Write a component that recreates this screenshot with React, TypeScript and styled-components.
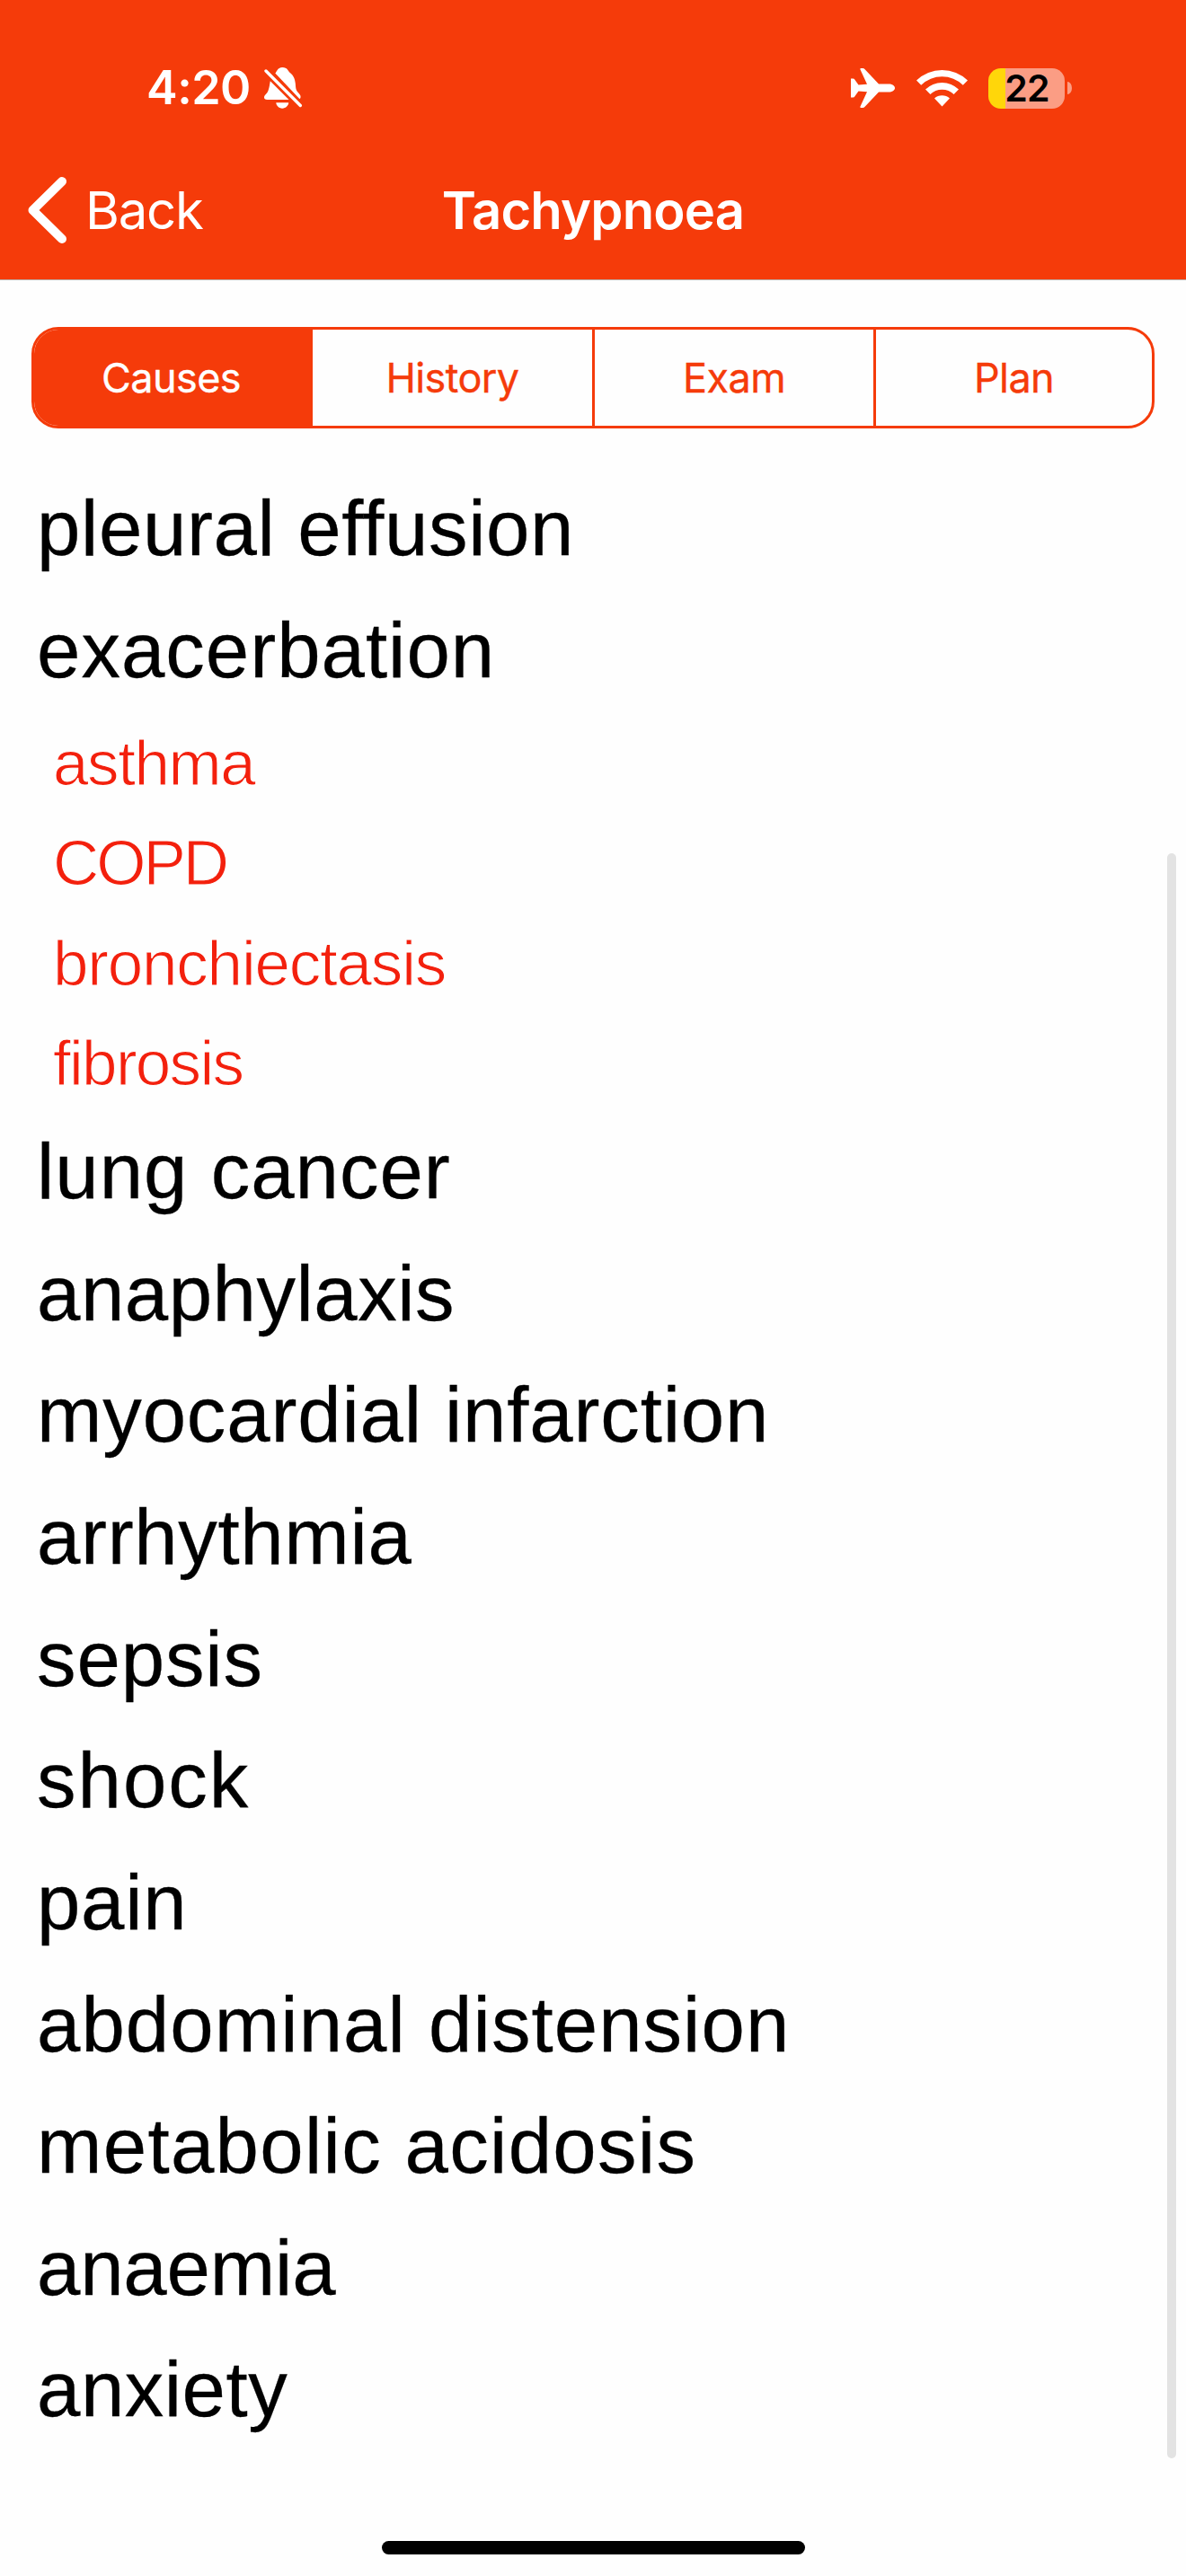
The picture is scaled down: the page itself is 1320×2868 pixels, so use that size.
import React from "react";
import styled, { createGlobalStyle } from "styled-components";

const ORANGE = "#f53b0a";

const GlobalStyle = createGlobalStyle`
  * { box-sizing: border-box; }
  body { margin: 0; background: #fefefe; }
`;

const Screen = styled.div`
  position: relative;
  width: 1320px;
  height: 2868px;
  overflow: hidden;
  display: flex;
  flex-direction: column;
  background: #fefefe;
  font-family: Inter, "Liberation Sans", sans-serif;
`;

const Header = styled.header`
  height: 312px;
  flex: none;
  background: ${ORANGE};
  border-bottom: 1px solid #b9aca8;
  color: #fff;
`;

const StatusBar = styled.div`
  height: 156px;
  padding: 40px 127px 0 163px;
  display: flex;
  justify-content: space-between;
`;

const StatusGroup = styled.div<{ $gap: number }>`
  height: 116px;
  display: flex;
  align-items: center;
  gap: ${(p) => p.$gap}px;
`;

const Clock = styled.span`
  width: 116px;
  font-size: 52px;
  font-weight: 600;
  letter-spacing: -0.5px;
  line-height: 60px;
  white-space: nowrap;
`;

const Battery = styled.div`
  display: flex;
  align-items: center;
  gap: 3px;
`;

const BatteryBody = styled.div`
  width: 85px;
  height: 45px;
  padding-left: 1px;
  border-radius: 14px;
  display: flex;
  align-items: center;
  justify-content: center;
  background: linear-gradient(90deg, #ffd60a 0 19px, #fb9d84 19px);
  color: #000;
  font-size: 41px;
  font-weight: 600;
  letter-spacing: -0.8px;
  line-height: 45px;
`;

const BatteryTip = styled.div`
  width: 5px;
  height: 14px;
  border-radius: 0 5px 5px 0 / 0 7px 7px 0;
  background: #fb9d84;
`;

const NavBar = styled.nav`
  height: 155px;
  display: grid;
  grid-template-columns: 1fr auto 1fr;
  align-items: center;
  padding: 0 31px;
`;

const BackButton = styled.button`
  display: flex;
  align-items: center;
  gap: 20px;
  padding: 0;
  border: 0;
  background: none;
  color: #fff;
  font: 400 58px/70px Inter, sans-serif;
  letter-spacing: -1.2px;
`;

const Title = styled.h1`
  margin: 0;
  font-size: 58px;
  font-weight: 600;
  letter-spacing: -0.85px;
  line-height: 70px;
`;

const Segments = styled.div`
  flex: none;
  width: 1250px;
  height: 113px;
  margin: 52px 35px 0;
  border: 3px solid ${ORANGE};
  border-radius: 30px;
  overflow: hidden;
  display: grid;
  grid-template-columns: 310px 311px 313px 1fr;
`;

const Segment = styled.button<{ $active?: boolean; $divided?: boolean }>`
  border: 0;
  border-left: ${(p) => (p.$divided ? 3 : 0)}px solid ${ORANGE};
  padding: 0 ${(p) => (p.$active ? 5 : 0)}px 0 0;
  background: ${(p) => (p.$active ? ORANGE : "transparent")};
  color: ${(p) => (p.$active ? "#fff" : ORANGE)};
  font: 400 45px/60px Inter, sans-serif;
  letter-spacing: -0.6px;
  -webkit-text-stroke: 0.35px currentColor;
`;

const List = styled.ul`
  list-style: none;
  margin: 0;
  padding: 43px 0 0;
  font-family: "Liberation Sans", Arial, sans-serif;
`;

const Cause = styled.li<{ $tracking: number }>`
  height: 135.65px;
  padding-left: 41px;
  font-size: 87px;
  line-height: 135.65px;
  letter-spacing: ${(p) => p.$tracking}px;
  color: #000;
  -webkit-text-stroke: 0.3px #000;
  white-space: nowrap;
`;

const SubCause = styled.li<{ $tracking: number }>`
  height: 111.2px;
  padding-left: 59px;
  font-size: 71px;
  line-height: 117.5px;
  letter-spacing: ${(p) => p.$tracking}px;
  color: #f3200d;
  -webkit-text-stroke: 1.1px #fefefe;
  white-space: nowrap;
`;

const ScrollThumb = styled.div`
  position: absolute;
  left: 1299px;
  top: 950px;
  width: 10px;
  height: 1787px;
  border-radius: 5px;
  background: #e3e3e3;
`;

const HomeIndicator = styled.div`
  position: absolute;
  left: 425px;
  top: 2829px;
  width: 471px;
  height: 15px;
  border-radius: 8px;
  background: #000;
`;

const BellOff = () => (
  <svg width="43" height="46" viewBox="0 0 43 46" fill="#fff">
    <path d="M12.300 6.500C14 5.500 14.500 0 20.300 0s6.200 4 8.200 5.700c4.300 3 5.800 7.300 6.300 12.300.4 6 .7 7.500 3 10 1.800 2 3.200 3.500 2.700 5.500-.1.900-.6 1.500-1.200 1.500Z" />
    <path d="M6.800 15.300 27.500 36H3.500C1 36 0 34.800 0 33.500c0-3 3-3.500 4.500-7.500C6 22 6 19 6.800 15.300Z" />
    <path d="M13.300 39.300h13.900c0 3-3 6.400-7 6.400s-6.900-3.400-6.900-6.400Z" />
    <path d="M2 4 40.300 42.500" stroke="#fff" strokeWidth="3.400" strokeLinecap="round" />
  </svg>
);

const Plane = () => (
  <svg width="49" height="44" viewBox="0 0 49 44" fill="#fff">
    <path d="M0 11.500h2.500c.8 0 1.300.3 1.700.9L8.500 18.500 18 17.700 10.500 1.500C10.200.6 10.500 0 11.300 0h2c.9 0 1.500.3 2.100 1L31 17.500h11c4 0 7 2 7 4.500s-3 4.500-7 4.500H31L15.400 43c-.6.700-1.200 1-2.100 1h-2c-.8 0-1.100-.6-.8-1.500L18 26.300l-9.500-.8-4.300 6.100c-.4.600-.9.900-1.700.9H0Z" />
  </svg>
);

const Wifi = () => (
  <svg width="57" height="42" viewBox="0 0 57 42" fill="#fff">
    <path d="M0 12.500a41 41 0 0 1 57 0l-5.200 5.300a33.500 33.500 0 0 0-46.600 0Z" />
    <path d="M10 22.500a26.500 26.500 0 0 1 37 0l-5.400 5.400a19 19 0 0 0-26.200 0Z" />
    <path d="M20 32.500a13 13 0 0 1 17 0L28.500 41.500Z" />
  </svg>
);

const Chevron = () => (
  <svg width="44" height="74" viewBox="0 0 44 74" fill="none" stroke="#fff" strokeWidth="10" strokeLinecap="round" strokeLinejoin="round">
    <path d="M38 5 5.500 37 38 69" />
  </svg>
);

const tabs = ["Causes", "History", "Exam", "Plan"];

const causes: { text: string; tracking: number; sub?: boolean }[] = [
  { text: "pleural effusion", tracking: 0.6 },
  { text: "exacerbation", tracking: 1 },
  { text: "asthma", tracking: -1.4, sub: true },
  { text: "COPD", tracking: -3, sub: true },
  { text: "bronchiectasis", tracking: -1.2, sub: true },
  { text: "fibrosis", tracking: -1.7, sub: true },
  { text: "lung cancer", tracking: 1 },
  { text: "anaphylaxis", tracking: 0.5 },
  { text: "myocardial infarction", tracking: 0.83 },
  { text: "arrhythmia", tracking: 0.65 },
  { text: "sepsis", tracking: 0.9 },
  { text: "shock", tracking: 2 },
  { text: "pain", tracking: 0.7 },
  { text: "abdominal distension", tracking: 1.05 },
  { text: "metabolic acidosis", tracking: 1.3 },
  { text: "anaemia", tracking: -0.2 },
  { text: "anxiety", tracking: 0.5 },
];

export default function App() {
  return (
    <Screen>
      <GlobalStyle />
      <Header>
        <StatusBar>
          <StatusGroup $gap={15}>
            <Clock>4:20</Clock>
            <BellOff />
          </StatusGroup>
          <StatusGroup $gap={23.5}>
            <Plane />
            <Wifi />
            <Battery>
              <BatteryBody>22</BatteryBody>
              <BatteryTip />
            </Battery>
          </StatusGroup>
        </StatusBar>
        <NavBar>
          <BackButton>
            <Chevron />
            Back
          </BackButton>
          <Title>Tachypnoea</Title>
        </NavBar>
      </Header>
      <Segments>
        {tabs.map((t, i) => (
          <Segment key={t} $active={i === 0} $divided={i > 1}>{t}</Segment>
        ))}
      </Segments>
      <List>
        {causes.map(({ text, tracking, sub }) =>
          sub ? (
            <SubCause key={text} $tracking={tracking}>{text}</SubCause>
          ) : (
            <Cause key={text} $tracking={tracking}>{text}</Cause>
          )
        )}
      </List>
      <ScrollThumb />
      <HomeIndicator />
    </Screen>
  );
}
